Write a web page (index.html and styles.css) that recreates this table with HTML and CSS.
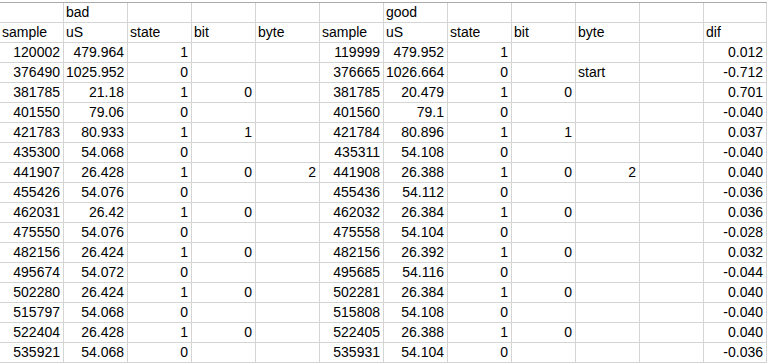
FILE: index.html
```html
<!DOCTYPE html>
<html lang="en">
  <head>
    <meta charset="UTF-8" />
    <meta name="viewport" content="width=device-width, initial-scale=1.0" />
    <title>bad vs good timing</title>
    <link rel="stylesheet" href="styles.css">
  </head>

  <body>
    <table class="sheet">
      <colgroup>
        <col class="col" span="11" />
        <col class="col-last" />
      </colgroup>
      <tr>
        <td></td><td>bad</td><td></td><td></td><td></td>
        <td></td><td>good</td><td></td><td></td><td></td>
        <td></td><td></td>
      </tr>
      <tr>
        <td>sample</td><td>uS</td><td>state</td><td>bit</td><td>byte</td>
        <td>sample</td><td>uS</td><td>state</td><td>bit</td><td>byte</td>
        <td></td><td>dif</td>
      </tr>
      <tr>
        <td class="num">120002</td><td class="num">479.964</td><td class="num">1</td><td></td><td></td>
        <td class="num">119999</td><td class="num">479.952</td><td class="num">1</td><td></td><td></td>
        <td></td><td class="num">0.012</td>
      </tr>
      <tr>
        <td class="num">376490</td><td class="num">1025.952</td><td class="num">0</td><td></td><td></td>
        <td class="num">376665</td><td class="num">1026.664</td><td class="num">0</td><td></td><td>start</td>
        <td></td><td class="num">-0.712</td>
      </tr>
      <tr>
        <td class="num">381785</td><td class="num">21.18</td><td class="num">1</td><td class="num">0</td><td></td>
        <td class="num">381785</td><td class="num">20.479</td><td class="num">1</td><td class="num">0</td><td></td>
        <td></td><td class="num">0.701</td>
      </tr>
      <tr>
        <td class="num">401550</td><td class="num">79.06</td><td class="num">0</td><td></td><td></td>
        <td class="num">401560</td><td class="num">79.1</td><td class="num">0</td><td></td><td></td>
        <td></td><td class="num">-0.040</td>
      </tr>
      <tr>
        <td class="num">421783</td><td class="num">80.933</td><td class="num">1</td><td class="num">1</td><td></td>
        <td class="num">421784</td><td class="num">80.896</td><td class="num">1</td><td class="num">1</td><td></td>
        <td></td><td class="num">0.037</td>
      </tr>
      <tr>
        <td class="num">435300</td><td class="num">54.068</td><td class="num">0</td><td></td><td></td>
        <td class="num">435311</td><td class="num">54.108</td><td class="num">0</td><td></td><td></td>
        <td></td><td class="num">-0.040</td>
      </tr>
      <tr>
        <td class="num">441907</td><td class="num">26.428</td><td class="num">1</td><td class="num">0</td><td class="num">2</td>
        <td class="num">441908</td><td class="num">26.388</td><td class="num">1</td><td class="num">0</td><td class="num">2</td>
        <td></td><td class="num">0.040</td>
      </tr>
      <tr>
        <td class="num">455426</td><td class="num">54.076</td><td class="num">0</td><td></td><td></td>
        <td class="num">455436</td><td class="num">54.112</td><td class="num">0</td><td></td><td></td>
        <td></td><td class="num">-0.036</td>
      </tr>
      <tr>
        <td class="num">462031</td><td class="num">26.42</td><td class="num">1</td><td class="num">0</td><td></td>
        <td class="num">462032</td><td class="num">26.384</td><td class="num">1</td><td class="num">0</td><td></td>
        <td></td><td class="num">0.036</td>
      </tr>
      <tr>
        <td class="num">475550</td><td class="num">54.076</td><td class="num">0</td><td></td><td></td>
        <td class="num">475558</td><td class="num">54.104</td><td class="num">0</td><td></td><td></td>
        <td></td><td class="num">-0.028</td>
      </tr>
      <tr>
        <td class="num">482156</td><td class="num">26.424</td><td class="num">1</td><td class="num">0</td><td></td>
        <td class="num">482156</td><td class="num">26.392</td><td class="num">1</td><td class="num">0</td><td></td>
        <td></td><td class="num">0.032</td>
      </tr>
      <tr>
        <td class="num">495674</td><td class="num">54.072</td><td class="num">0</td><td></td><td></td>
        <td class="num">495685</td><td class="num">54.116</td><td class="num">0</td><td></td><td></td>
        <td></td><td class="num">-0.044</td>
      </tr>
      <tr>
        <td class="num">502280</td><td class="num">26.424</td><td class="num">1</td><td class="num">0</td><td></td>
        <td class="num">502281</td><td class="num">26.384</td><td class="num">1</td><td class="num">0</td><td></td>
        <td></td><td class="num">0.040</td>
      </tr>
      <tr>
        <td class="num">515797</td><td class="num">54.068</td><td class="num">0</td><td></td><td></td>
        <td class="num">515808</td><td class="num">54.108</td><td class="num">0</td><td></td><td></td>
        <td></td><td class="num">-0.040</td>
      </tr>
      <tr>
        <td class="num">522404</td><td class="num">26.428</td><td class="num">1</td><td class="num">0</td><td></td>
        <td class="num">522405</td><td class="num">26.388</td><td class="num">1</td><td class="num">0</td><td></td>
        <td></td><td class="num">0.040</td>
      </tr>
      <tr>
        <td class="num">535921</td><td class="num">54.068</td><td class="num">0</td><td></td><td></td>
        <td class="num">535931</td><td class="num">54.104</td><td class="num">0</td><td></td><td></td>
        <td></td><td class="num">-0.036</td>
      </tr>
    </table>
  </body>
</html>
```

FILE: styles.css
```css
* {
  box-sizing: border-box;
  margin: 0;
  padding: 0;
}

body {
  font-family: 'Liberation Sans', Arial, sans-serif;
  font-size: 14px;
  color: #000;
  background: #fff;
  padding-top: 2px;
  overflow: hidden;
}

.sheet {
  border-collapse: separate;
  border-spacing: 0;
  table-layout: fixed;
  width: 767px;
  border-top: 1px solid #ababab;
}

.col {
  width: 64px;
}

.col-last {
  width: 63px;
}

.sheet td {
  height: 20px;
  line-height: 19px;
  padding: 0 2px;
  border-right: 1px solid #d4d4d4;
  border-bottom: 1px solid #d4d4d4;
  white-space: nowrap;
  overflow: hidden;
  vertical-align: bottom;
}

.sheet td.num {
  text-align: right;
  padding-right: 3px;
}
```
